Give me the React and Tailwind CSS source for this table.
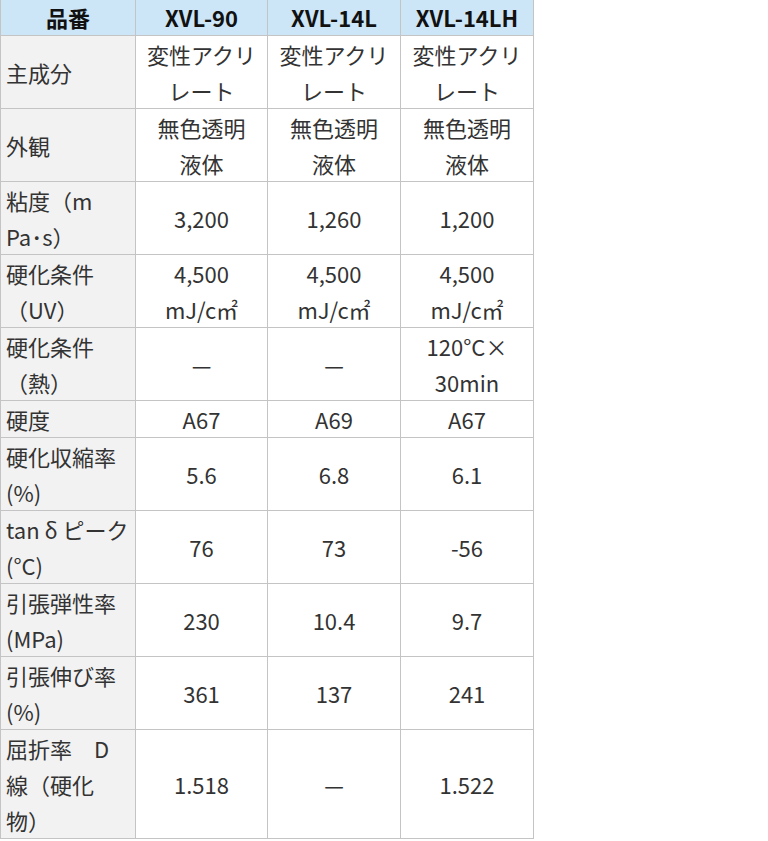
import React from 'react';

const HEAD = ['品番', 'XVL-90', 'XVL-14L', 'XVL-14LH'];

const ROWS = [
  { label: ['主成分'], vals: [['変性アクリ', 'レート'], ['変性アクリ', 'レート'], ['変性アクリ', 'レート']] },
  { label: ['外観'], vals: [['無色透明', '液体'], ['無色透明', '液体'], ['無色透明', '液体']] },
  { label: ['粘度（m', 'Pa･s）'], vals: [['3,200'], ['1,260'], ['1,200']] },
  { label: ['硬化条件', '（UV）'], vals: [['4,500', 'mJ/c㎡'], ['4,500', 'mJ/c㎡'], ['4,500', 'mJ/c㎡']] },
  { label: ['硬化条件', '（熱）'], vals: [['—'], ['—'], ['120°C×', '30min']] },
  { label: ['硬度'], vals: [['A67'], ['A69'], ['A67']] },
  { label: ['硬化収縮率', '(%)'], vals: [['5.6'], ['6.8'], ['6.1']] },
  { label: ['tan δ ピーク', '(°C)'], vals: [['76'], ['73'], ['-56']] },
  { label: ['引張弾性率', '(MPa)'], vals: [['230'], ['10.4'], ['9.7']] },
  { label: ['引張伸び率', '(%)'], vals: [['361'], ['137'], ['241']] },
  { label: ['屈折率　D', '線（硬化', '物）'], vals: [['1.518'], ['—'], ['1.522']] },
];

function Lines({ lines }) {
  return lines.map((l, i) => (
    <React.Fragment key={i}>
      {i > 0 && <br />}
      {l}
    </React.Fragment>
  ));
}

export default function App() {
  return (
    <div className="w-[768px] h-[841px] bg-white" style={{ fontFamily: '"Noto Sans CJK JP", "Noto Sans", sans-serif' }}>
      <table className="border-collapse text-[22px] leading-[36px] text-[#333]">
        <colgroup>
          <col className="w-[135px]" />
          <col className="w-[132px]" />
          <col className="w-[133px]" />
          <col className="w-[133px]" />
        </colgroup>
        <thead>
          <tr className="bg-[#cce6f8]">
            {HEAD.map(h => (
              <th key={h} className="border border-[#c4c4c4] border-t-0 px-[5px] py-0 text-center font-bold text-[#111] leading-[35px]">{h}</th>
            ))}
          </tr>
        </thead>
        <tbody>
          {ROWS.map((r, i) => (
            <tr key={i}>
              <td className="border border-[#c4c4c4] bg-[#f2f2f2] px-[5px] py-0 text-left align-middle whitespace-nowrap">
                <Lines lines={r.label} />
              </td>
              {r.vals.map((v, j) => (
                <td key={j} className="border border-[#c4c4c4] bg-white px-[5px] py-0 text-center align-middle whitespace-nowrap">
                  <Lines lines={v} />
                </td>
              ))}
            </tr>
          ))}
        </tbody>
      </table>
    </div>
  );
}
